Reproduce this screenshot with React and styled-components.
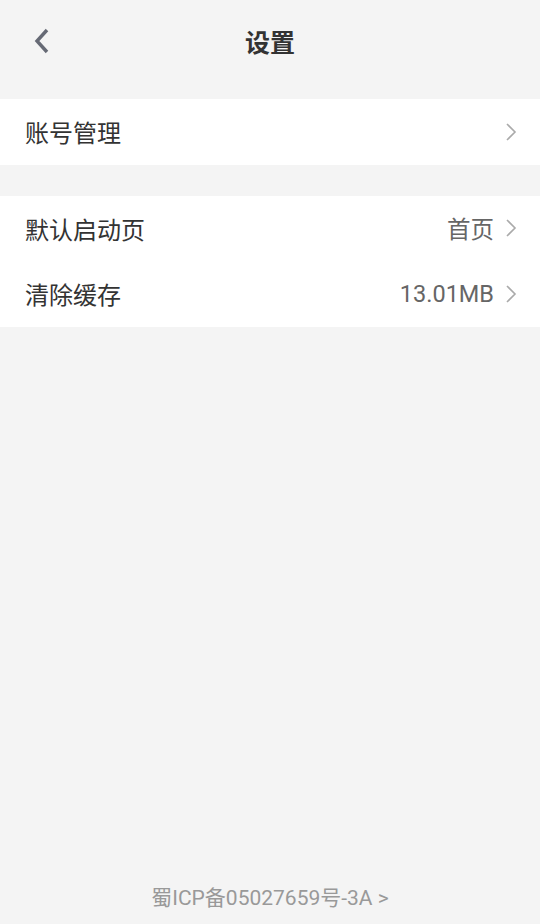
import React from 'react'
import styled, { createGlobalStyle } from 'styled-components'

const Global = createGlobalStyle`
  html, body { margin: 0; padding: 0; background: #f4f4f4; }
  body { font-family: Roboto, "Noto Sans CJK SC", sans-serif; }
`

const Page = styled.div`
  display: flex;
  flex-direction: column;
  min-height: 924px;
  background: #f4f4f4;
`

const Header = styled.div`
  position: relative;
  height: 82px;
  display: flex;
  align-items: center;
  justify-content: center;
  margin-bottom: 17px;
`

const Back = styled.div`
  position: absolute;
  left: 30px;
  top: 27px;
  width: 24px;
  height: 28px;
  display: flex;
  align-items: center;
  justify-content: center;
`

const Title = styled.h1`
  margin: 0;
  font-size: 25px;
  font-weight: 700;
  color: #333;
  font-family: "Noto Sans CJK SC", sans-serif;
`

const Group = styled.div`
  background: #fff;
  margin-bottom: ${p => p.gap || 0}px;
`

const Row = styled.div`
  height: 65.5px;
  display: flex;
  align-items: center;
  padding: 0 23px 0 25px;
`

const Label = styled.span`
  flex: 1;
  font-size: 24px;
  color: #333;
  font-family: "Noto Sans CJK SC", sans-serif;
`

const Value = styled.span`
  font-size: 23.5px;
  color: #666;
  margin-right: 11px;
  font-family: Roboto, "Noto Sans CJK SC", sans-serif;
`

const Footer = styled.div`
  margin-top: auto;
  text-align: center;
  font-size: 21px;
  color: #999;
  padding-bottom: 13px;
  font-family: Roboto, "Noto Sans CJK SC", sans-serif;
`

const Arrow = () => (
  <svg width="12" height="20" viewBox="0 0 12 20">
    <path d="M2 2 L10 10 L2 18" fill="none" stroke="#aaa" strokeWidth="1.6" />
  </svg>
)

const Item = ({ label, value }) => (
  <Row>
    <Label>{label}</Label>
    {value && <Value>{value}</Value>}
    <Arrow />
  </Row>
)

export default function App() {
  return (
    <Page>
      <Global />
      <Header>
        <Back>
          <svg width="16" height="26" viewBox="0 0 16 26">
            <path d="M13 2 L3 13 L13 24" fill="none" stroke="#666a75" strokeWidth="3.4" />
          </svg>
        </Back>
        <Title>设置</Title>
      </Header>
      <Group gap={31}>
        <Item label="账号管理" />
      </Group>
      <Group>
        <Item label="默认启动页" value="首页" />
        <Item label="清除缓存" value="13.01MB" />
      </Group>
      <Footer>蜀ICP备05027659号-3A &gt;</Footer>
    </Page>
  )
}
